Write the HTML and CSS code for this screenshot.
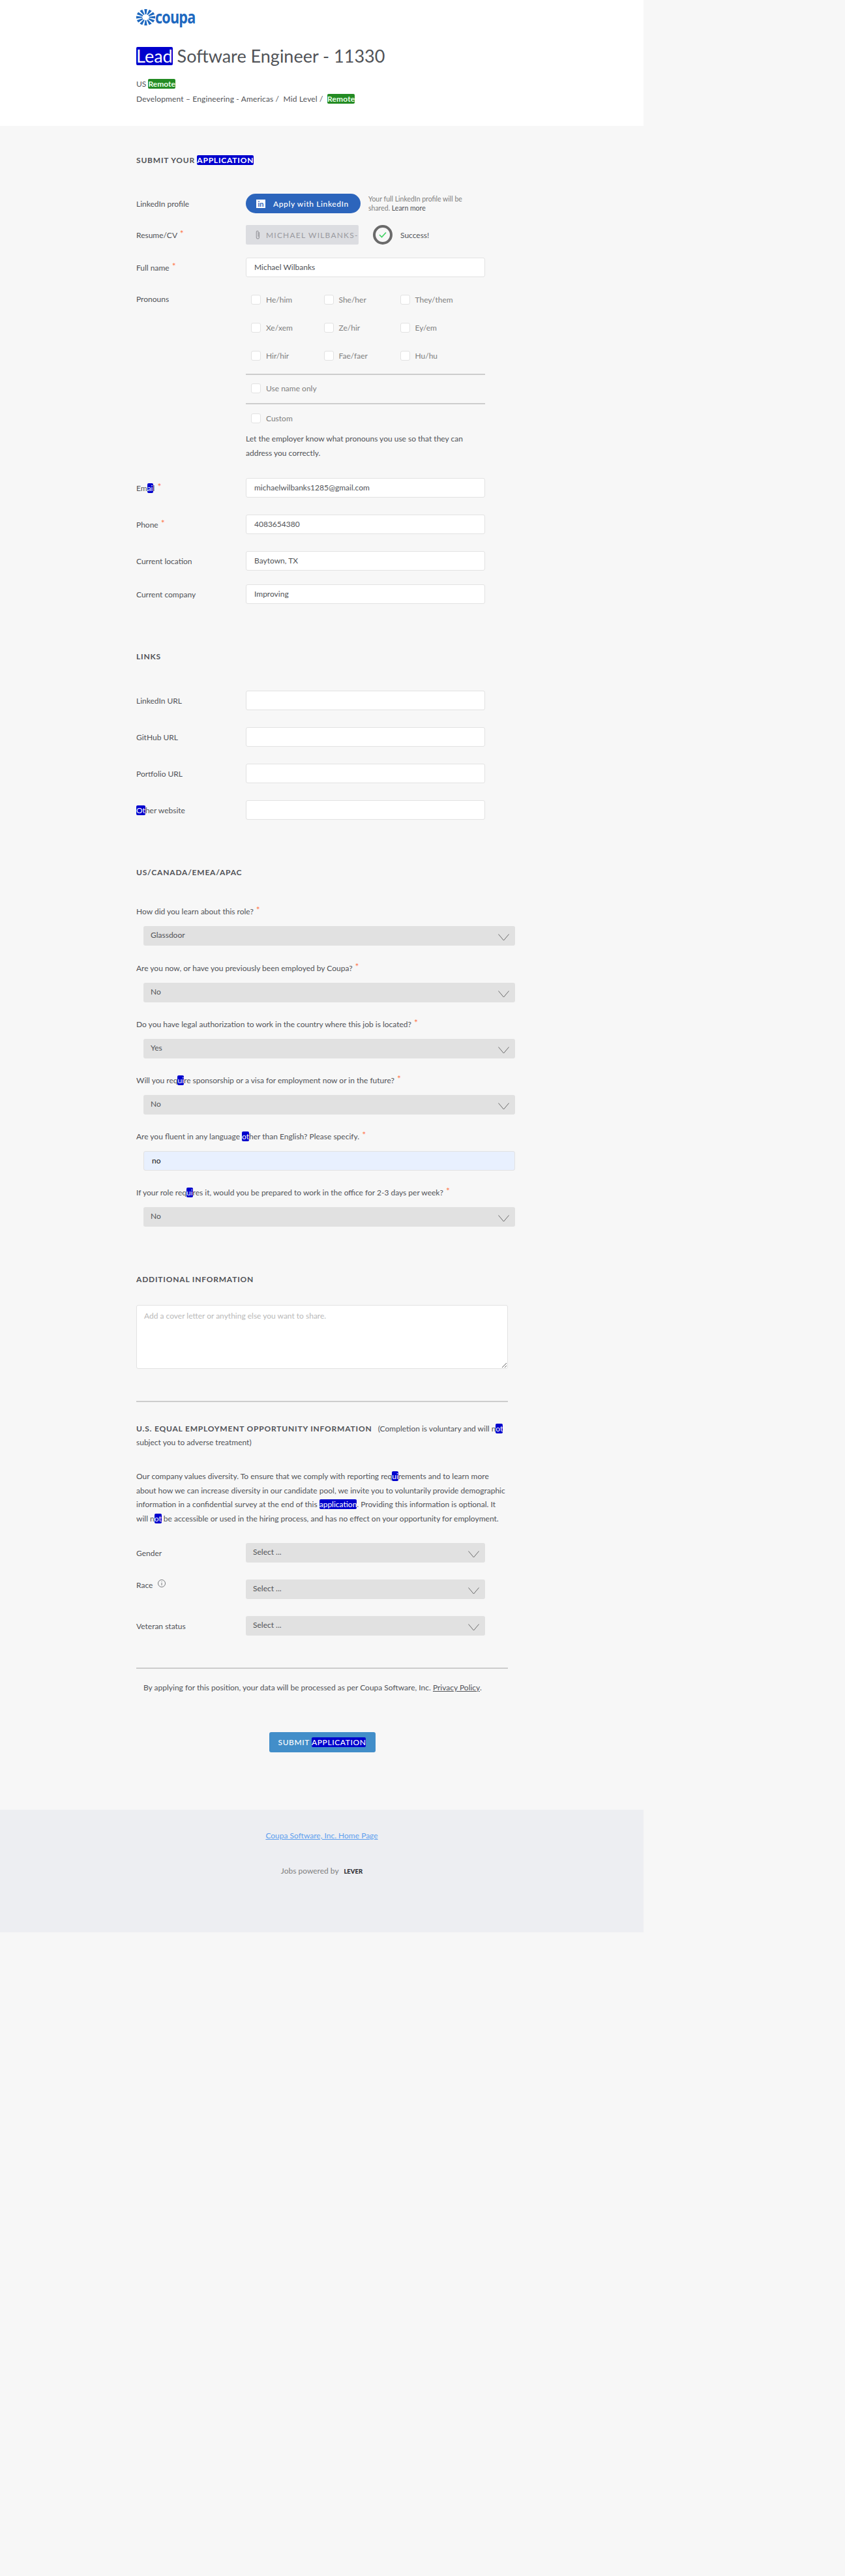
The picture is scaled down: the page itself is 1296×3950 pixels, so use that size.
FILE: index.html
```html
<!DOCTYPE html>
<html lang="en">
<head>
    <meta charset="UTF-8">
    <title>Coupa Software, Inc. - Lead Software Engineer - 11330</title>
    <link rel="stylesheet" href="styles.css">
</head>
<body>

<div class="page">
    <div class="header">
        <a class="logo">
            <svg class="logo-mark" width="29" height="25" viewBox="-13 -13 26 26" preserveAspectRatio="none">
                <g fill="#1d68bf">
                    <path id="ray" d="M-2 -13 L2 -13 L0.8 -4.6 L-0.8 -4.6 Z"/>
                    <use href="#ray" transform="rotate(30)"/>
                    <use href="#ray" transform="rotate(60)"/>
                    <use href="#ray" transform="rotate(90)"/>
                    <use href="#ray" transform="rotate(120)"/>
                    <use href="#ray" transform="rotate(150)"/>
                    <use href="#ray" transform="rotate(180)"/>
                    <use href="#ray" transform="rotate(210)"/>
                    <use href="#ray" transform="rotate(240)"/>
                    <use href="#ray" transform="rotate(270)"/>
                    <use href="#ray" transform="rotate(300)"/>
                    <use href="#ray" transform="rotate(330)"/>
                </g>
            </svg>
            <span class="logo-text">coupa</span>
        </a>
        <h1 class="title"><span class="hl title-hl">Lead</span> Software Engineer - 11330</h1>
        <div class="location">US <span class="hl-green">Remote</span></div>
        <div class="categories">Development – Engineering - Americas /&nbsp; Mid Level /&nbsp; <span class="hl-green">Remote</span></div>
    </div>

    <div class="form">
        <h4 class="section-title first">SUBMIT YOUR <span class="hl">APPLICATION</span></h4>

        <div class="row">
            <div class="label">LinkedIn profile</div>
            <a class="linkedin-btn"><span class="in-icon">in</span>Apply with LinkedIn</a>
            <div class="linkedin-note">Your full LinkedIn profile will be shared. <b>Learn more</b></div>
        </div>

        <div class="row m18">
            <div class="label">Resume/CV <span class="req">*</span></div>
            <div class="resume-btn">
                <svg width="9" height="14" viewBox="0 0 9 14" fill="none" stroke="#9a9aa0" stroke-width="1.2">
                    <path d="M6.5 3 V10.5 C6.5 12 5.6 13 4.4 13 C3.2 13 2.3 12 2.3 10.5 V3 C2.3 1.8 3 1 3.9 1 C4.8 1 5 1.8 5 3 V10"/>
                </svg>
                <span class="resume-name">MICHAEL WILBANKS-</span>
            </div>
            <div class="success-ring">
                <svg width="14" height="12" viewBox="0 0 14 12" fill="none" stroke="#3ed160" stroke-width="1.6">
                    <path d="M2 6 L5.5 9.5 L12 2.5"/>
                </svg>
            </div>
            <div class="success-text">Success!</div>
        </div>

        <div class="row m20">
            <div class="label">Full name <span class="req">*</span></div>
            <div class="input">Michael Wilbanks</div>
        </div>

        <div class="row row-top m13">
            <div class="label label-pronouns">Pronouns</div>
            <div class="pronouns">
                <div class="pronoun-grid">
                    <label class="check"><span class="box"></span>He/him</label>
                    <label class="check"><span class="box"></span>She/her</label>
                    <label class="check"><span class="box"></span>They/them</label>
                    <label class="check"><span class="box"></span>Xe/xem</label>
                    <label class="check"><span class="box"></span>Ze/hir</label>
                    <label class="check"><span class="box"></span>Ey/em</label>
                    <label class="check"><span class="box"></span>Hir/hir</label>
                    <label class="check"><span class="box"></span>Fae/faer</label>
                    <label class="check"><span class="box"></span>Hu/hu</label>
                </div>
                <label class="check check-name-only"><span class="box"></span>Use name only</label>
                <label class="check check-custom"><span class="box"></span>Custom</label>
                <p class="pronoun-note">Let the employer know what pronouns you use so that they can address you correctly.</p>
            </div>
        </div>

        <div class="row m27">
            <div class="label">Em<span class="hl">ai</span>l <span class="req">*</span></div>
            <div class="input">michaelwilbanks1285@gmail.com</div>
        </div>
        <div class="row m26">
            <div class="label">Phone <span class="req">*</span></div>
            <div class="input">4083654380</div>
        </div>
        <div class="row m26">
            <div class="label">Current location</div>
            <div class="input">Baytown, TX</div>
        </div>
        <div class="row m21">
            <div class="label">Current company</div>
            <div class="input">Improving</div>
        </div>

        <h4 class="section-title">LINKS</h4>
        <div class="row">
            <div class="label">LinkedIn URL</div>
            <input class="input" type="text">
        </div>
        <div class="row m26">
            <div class="label">GitHub URL</div>
            <input class="input" type="text">
        </div>
        <div class="row m26">
            <div class="label">Portfolio URL</div>
            <input class="input" type="text">
        </div>
        <div class="row m26">
            <div class="label"><span class="hl">Ot</span>her website</div>
            <input class="input" type="text">
        </div>

        <h4 class="section-title title-us">US/CANADA/EMEA/APAC</h4>

        <div class="question">How did you learn about this role? <span class="req">*</span></div>
        <div class="select select-wide">Glassdoor
            <svg class="chevron" width="17" height="11" viewBox="0 0 17 11"><path d="M0.5 0.5 L8.5 10 L16.5 0.5"/></svg>
        </div>
        <div class="question question-second">Are you now, or have you previously been employed by Coupa? <span class="req">*</span></div>
        <div class="select select-wide">No
            <svg class="chevron" width="17" height="11" viewBox="0 0 17 11"><path d="M0.5 0.5 L8.5 10 L16.5 0.5"/></svg>
        </div>
        <div class="question">Do you have legal authorization to work in the country where this job is located? <span class="req">*</span></div>
        <div class="select select-wide">Yes
            <svg class="chevron" width="17" height="11" viewBox="0 0 17 11"><path d="M0.5 0.5 L8.5 10 L16.5 0.5"/></svg>
        </div>
        <div class="question">Will you req<span class="hl">ui</span>re sponsorship or a visa for employment now or in the future? <span class="req">*</span></div>
        <div class="select select-wide">No
            <svg class="chevron" width="17" height="11" viewBox="0 0 17 11"><path d="M0.5 0.5 L8.5 10 L16.5 0.5"/></svg>
        </div>
        <div class="question">Are you fluent in any language <span class="hl">ot</span>her than English? Please specify. <span class="req">*</span></div>
        <div class="input input-filled">no</div>
        <div class="question">If your role req<span class="hl">ui</span>res it, would you be prepared to work in the office for 2-3 days per week? <span class="req">*</span></div>
        <div class="select select-wide">No
            <svg class="chevron" width="17" height="11" viewBox="0 0 17 11"><path d="M0.5 0.5 L8.5 10 L16.5 0.5"/></svg>
        </div>

        <h4 class="section-title title-additional">ADDITIONAL INFORMATION</h4>
        <textarea class="cover-letter">Add a cover letter or anything else you want to share.</textarea>

        <hr class="rule rule-eeo">

        <div class="eeo-title"><span class="eeo-caps">U.S. EQUAL EMPLOYMENT OPPORTUNITY INFORMATION</span> &nbsp; (Completion is voluntary and will n<span class="hl">ot</span> subject you to adverse treatment)</div>
        <p class="eeo-text">Our company values diversity. To ensure that we comply with reporting req<span class="hl">ui</span>rements and to learn more about how we can increase diversity in our candidate pool, we invite you to voluntarily provide demographic information in a confidential survey at the end of this <span class="hl">application</span>. Providing this information is optional. It will n<span class="hl">ot</span> be accessible or used in the hiring process, and has no effect on your opportunity for employment.</p>

        <div class="row">
            <div class="label">Gender</div>
            <div class="select">Select ...
                <svg class="chevron" width="17" height="11" viewBox="0 0 17 11"><path d="M0.5 0.5 L8.5 10 L16.5 0.5"/></svg>
            </div>
        </div>
        <div class="row row-top m26">
            <div class="label label-race">Race
                <svg class="info" width="12" height="12" viewBox="0 0 12 12" fill="none" stroke="#77797d">
                    <circle cx="6" cy="6" r="5.5"/>
                    <path d="M6 5 V9 M6 3 V4"/>
                </svg>
            </div>
            <div class="select">Select ...
                <svg class="chevron" width="17" height="11" viewBox="0 0 17 11"><path d="M0.5 0.5 L8.5 10 L16.5 0.5"/></svg>
            </div>
        </div>
        <div class="row m26">
            <div class="label">Veteran status</div>
            <div class="select">Select ...
                <svg class="chevron" width="17" height="11" viewBox="0 0 17 11"><path d="M0.5 0.5 L8.5 10 L16.5 0.5"/></svg>
            </div>
        </div>

        <hr class="rule rule-privacy">

        <p class="privacy">By applying for this position, your data will be processed as per Coupa Software, Inc. <a class="privacy-link">Privacy Policy</a>.</p>

        <div class="submit-wrap">
            <button class="submit-btn" type="button">SUBMIT <span class="hl">APPLICATION</span></button>
        </div>
    </div>

    <div class="footer">
        <a class="footer-link">Coupa Software, Inc. Home Page</a>
        <div class="powered">Jobs powered by <span class="lever">LEVER</span></div>
    </div>
</div>

</body>
</html>
```

FILE: styles.css
```css
* {
    box-sizing: border-box;
}

body {
    font-family: Lato, "Open Sans", sans-serif;
    font-size: 12px;
    background-color: #f7f7f7;
    color: #515357;
    margin: 0;
    padding: 0;
}

.page {
    width: 987px;
}

.hl {
    background-color: #0000cd;
    color: #fff;
    border-radius: 2px;
}

.hl-green {
    background-color: #238b23;
    color: #eaffea;
    border-radius: 2px;
    font-weight: 700;
}

.req {
    color: #ff794f;
    font-size: 14px;
    line-height: 0;
    position: relative;
    top: -2px;
    margin-left: 1px;
}

/* header */
.header {
    background-color: #fff;
    height: 193px;
    padding: 14px 0 0 209px;
}

.logo {
    display: flex;
    align-items: center;
    height: 24px;
    color: #1d68bf;
}

.logo-mark {
    flex: none;
}

.logo-text {
    font-family: "Open Sans", sans-serif;
    font-size: 27px;
    font-weight: 700;
    letter-spacing: -1px;
    line-height: 24px;
    transform: scaleX(0.8);
    transform-origin: left center;
}

.title {
    font-size: 27px;
    font-weight: 400;
    line-height: 28px;
    margin: 34px 0 0;
}

.title-hl {
    display: inline-block;
}

.location {
    margin-top: 20px;
    line-height: 18px;
}

.categories {
    margin-top: 5px;
    line-height: 18px;
    letter-spacing: 0.15px;
}

/* form */
.form {
    padding-left: 209px;
    width: 779px;
}

.section-title {
    font-size: 12px;
    font-weight: 700;
    letter-spacing: 0.8px;
    line-height: 20px;
    margin: 71px 0 42px;
}

.section-title.first {
    margin: 43px 0 41px;
}

.title-us {
    margin-bottom: 39px;
}

.title-additional {
    margin-bottom: 29px;
}

.row {
    display: flex;
    align-items: center;
    min-height: 30px;
}

.row-top {
    align-items: flex-start;
}

.m13 { margin-top: 13px; }
.m18 { margin-top: 18px; }
.m20 { margin-top: 20px; }
.m21 { margin-top: 21px; }
.m26 { margin-top: 26px; }
.m27 { margin-top: 27px; }

.label {
    width: 168px;
    flex: none;
}

.label-pronouns {
    line-height: 18px;
    margin-top: 12px;
}

.label-race {
    line-height: 16px;
}

.info {
    margin-left: 5px;
    vertical-align: 1px;
}

.input {
    display: block;
    width: 367px;
    height: 30px;
    line-height: 28px;
    padding: 0 12px;
    background-color: #fff;
    border: 1px solid #e2e2e2;
    border-radius: 3px;
    font-family: inherit;
    font-size: 12px;
    color: #515357;
}

.input-filled {
    width: 570px;
    margin-left: 11px;
    background-color: #e8f0fe;
    color: #111;
}

.linkedin-btn {
    display: flex;
    align-items: center;
    width: 176px;
    height: 30px;
    padding-left: 16px;
    background-color: #2c65bc;
    border-radius: 15px;
    color: #fff;
    font-weight: 500;
    letter-spacing: 0.6px;
}

.in-icon {
    display: block;
    width: 14px;
    height: 13px;
    margin-right: 12px;
    background-color: #fff;
    color: #2c65bc;
    font-size: 11px;
    font-weight: 700;
    line-height: 14px;
    letter-spacing: 0;
    text-align: center;
}

.linkedin-note {
    width: 165px;
    margin-left: 12px;
    font-size: 10.5px;
    line-height: 14px;
    color: #808080;
}

.linkedin-note b {
    color: #515357;
    font-weight: 400;
}

.resume-btn {
    display: flex;
    align-items: center;
    width: 173px;
    height: 30px;
    padding-left: 14px;
    background-color: #dcdde1;
    border-radius: 2px;
    overflow: hidden;
    white-space: nowrap;
}

.resume-name {
    margin-left: 8px;
    color: #9a9aa0;
    letter-spacing: 1.2px;
}

.success-ring {
    display: flex;
    align-items: center;
    justify-content: center;
    width: 30px;
    height: 30px;
    margin-left: 22px;
    border: 4px solid #6a6a6a;
    border-radius: 50%;
}

.success-text {
    margin-left: 12px;
}

/* pronouns */
.pronouns {
    width: 367px;
}

.pronoun-grid {
    display: grid;
    grid-template-columns: 111.5px 117px 1fr;
    padding-bottom: 6px;
    border-bottom: 2px solid #cdcdcd;
}

.check {
    display: flex;
    align-items: center;
    height: 43px;
    padding-left: 8px;
    color: #808080;
}

.check-name-only {
    height: 45px;
    padding-bottom: 2px;
    border-bottom: 2px solid #cdcdcd;
}

.check-custom {
    height: 42px;
}

.box {
    display: block;
    width: 15px;
    height: 15px;
    margin-right: 8px;
    background-color: #fff;
    border: 1px solid #e2e2e2;
    border-radius: 3px;
}

.pronoun-note {
    margin: 0;
    line-height: 22px;
}

/* questions */
.question {
    line-height: 22px;
    margin: 23px 0 11px;
}

.title-us + .question {
    margin-top: 0;
}

.question-second {
    margin-top: 24px;
}

.select {
    position: relative;
    width: 367px;
    height: 30px;
    line-height: 28px;
    padding-left: 11px;
    background-color: #e1e1e1;
    border-radius: 3px;
}

.select-wide {
    width: 570px;
    margin-left: 11px;
}

.chevron {
    position: absolute;
    right: 9px;
    top: 12px;
    fill: none;
    stroke: #6b6b6b;
}

.cover-letter {
    display: block;
    width: 570px;
    height: 98px;
    padding: 7px 11px;
    background-color: #fff;
    border: 1px solid #e2e2e2;
    border-radius: 3px;
    font-family: inherit;
    font-size: 12px;
    line-height: 18px;
    color: #b9b9b9;
}

.rule {
    height: 2px;
    border: 0;
    background-color: #cdcdcd;
    width: 570px;
}

.rule-eeo {
    margin: 49px 0 30px;
}

.eeo-title {
    line-height: 21px;
}

.eeo-caps {
    font-weight: 700;
    letter-spacing: 0.8px;
}

.eeo-text {
    line-height: 21.5px;
    margin: 31px 0 27px;
}

.rule-privacy {
    margin: 49px 0 18px;
}

.privacy {
    line-height: 22px;
    margin: 0;
    padding-left: 11px;
}

.privacy-link {
    text-decoration: underline;
}

.submit-wrap {
    display: flex;
    justify-content: center;
    width: 570px;
    margin: 57px 0 88px;
}

.submit-btn {
    width: 163px;
    height: 31px;
    background-color: #428ec9;
    border: 0;
    border-radius: 3px;
    color: #fff;
    font-family: inherit;
    font-size: 12px;
    font-weight: 500;
    letter-spacing: 0.6px;
}

/* footer */
.footer {
    height: 188px;
    padding-top: 31px;
    background-color: #edeef2;
    text-align: center;
}

.footer-link {
    display: block;
    line-height: 18px;
    color: #5d9eee;
    text-decoration: underline;
}

.powered {
    margin-top: 36px;
    line-height: 18px;
    color: #808080;
}

.lever {
    margin-left: 5px;
    color: #2b2b30;
    font-size: 9.5px;
    font-weight: 900;
}
```
